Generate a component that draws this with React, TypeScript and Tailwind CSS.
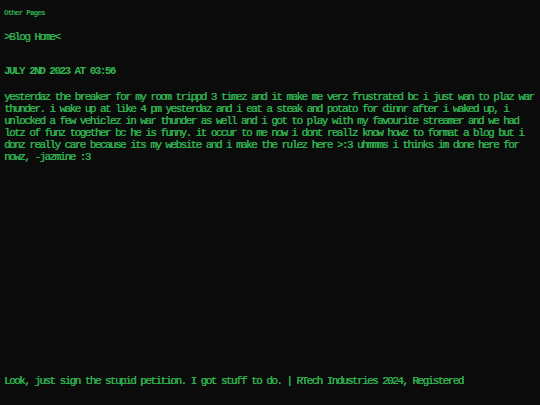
import React from "react";

export default function App() {
  const mono = { fontFamily: '"Liberation Mono", "DejaVu Sans Mono", monospace' };
  return (
    <div
      className="h-[405px] w-[540px] bg-[#0b0b0b] text-[#2fae4e] flex flex-col px-1 overflow-hidden"
      style={mono}
    >
      <div className="pt-[9px] text-[7.5px] leading-[8px] font-bold tracking-[-0.8px]">Other Pages</div>
      <a className="mt-[14px] text-[11px] leading-[12px] tracking-[-1.56px] text-[#2fae4e] [text-shadow:0.4px_0_0_#2fae4e]" href="#">
        &gt;Blog Home&lt;
      </a>
      <h1 className="mt-[22px] text-[11px] leading-[12px] font-bold tracking-[-1.56px] text-[#33b552]">
        JULY 2ND 2023 AT 03:56
      </h1>
      <p className="mt-[14px] w-[532px] text-[11px] leading-[12px] tracking-[-1.56px] [text-shadow:0.4px_0_0_#2fae4e]">
        yesterdaz the breaker for my room trippd 3 timez and it make me verz frustrated bc i just wan to plaz war
        thunder. i wake up at like 4 pm yesterdaz and i eat a steak and potato for dinnr after i waked up, i unlocked
        a few vehiclez in war thunder as well and i got to play with my favourite streamer and we had lotz of funz
        together bc he is funny. it occur to me now i dont reallz know howz to format a blog but i donz really care
        because its my website and i make the rulez here &gt;:3 uhmmms i thinks im done here for nowz, -jazmine :3
      </p>
      <footer className="mt-auto mb-[18px] text-[11px] leading-[12px] tracking-[-1.56px] [text-shadow:0.4px_0_0_#2fae4e]">
        Look, just sign the stupid petition. I got stuff to do. | RTech Industries 2024, Registered
      </footer>
    </div>
  );
}
